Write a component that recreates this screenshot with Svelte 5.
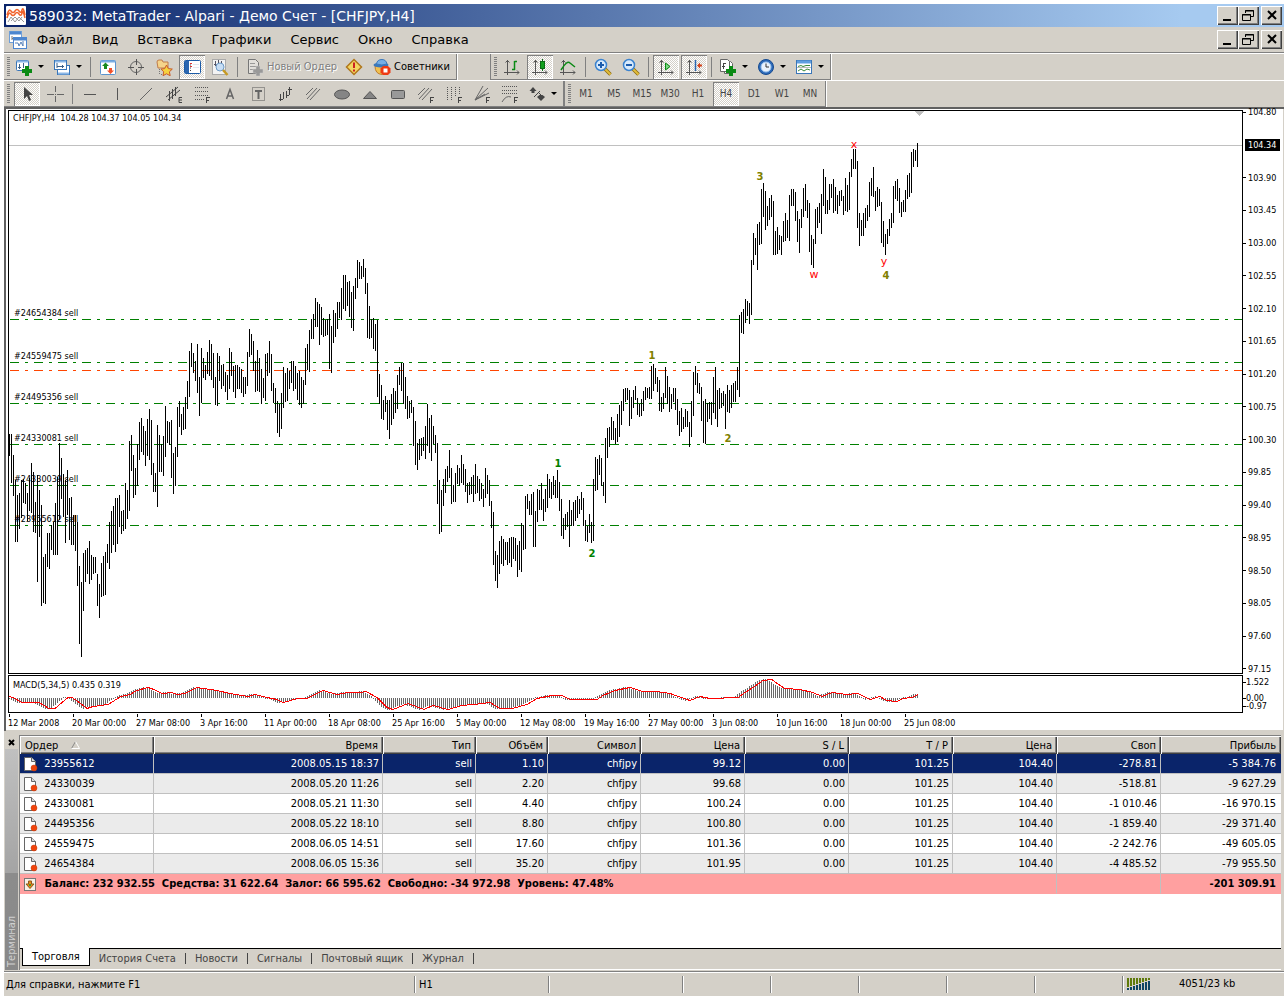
<script>
  // high-low of every bar, in pixels down the window
  const barData = `434-456 434-483 455-496 480-542 495-542 493-529 480-518 479-503 483-504 493-521 478-511 463-513 472-532 502-533 475-582
490-537 505-606 557-603 554-604 533-567 533-569 525-550 522-555 503-555 477-555 443-520 458-499 474-517 480-543 470-515
498-540 497-545 515-545 515-551 522-586 566-644 582-657 553-611 550-582 548-574 541-584 555-580 557-574 557-573 574-606
584-618 563-597 556-596 552-595 544-563 522-569 511-553 506-545 498-552 498-544 495-527 511-534 510-531 483-529 490-519
441-511 435-471 455-498 468-495 444-486 422-460 418-452 426-455 431-466 419-456 409-460 420-475 463-492 473-492 425-507
435-472 444-472 436-476 406-457 421-443 422-445 420-478 453-494 447-486 407-457 401-427 414-435 407-430 397-429 381-409
351-397 343-367 353-373 361-381 344-393 377-416 348-403 358-378 365-380 352-374 340-376 344-380 353-388 377-405 353-406
356-381 365-389 364-386 372-392 375-400 348-389 352-376 366-392 365-398 365-389 367-389 369-393 377-397 377-394 352-386
329-357 334-355 341-371 361-392 350-391 358-392 369-404 378-398 354-401 353-376 341-373 354-391 383-403 388-413 401-433
404-437 393-429 367-408 373-402 368-401 371-389 361-383 361-391 366-389 373-400 371-405 377-408 380-404 348-385 344-370
330-372 319-339 314-339 298-327 302-327 304-345 307-335 318-337 320-336 319-335 314-369 326-373 310-343 313-337 302-329
302-318 288-320 275-309 275-311 282-306 281-317 292-328 286-331 278-299 260-288 262-279 266-279 259-277 268-294 283-338
306-339 319-338 318-349 324-351 320-397 374-404 385-419 400-420 396-412 400-430 400-439 394-425 388-419 391-413 375-409
367-385 363-391 363-404 377-409 396-419 401-418 400-413 407-446 421-465 443-470 439-460 438-456 437-451 426-459 404-446
418-453 415-461 426-444 435-453 443-504 480-534 490-532 479-506 469-493 466-482 450-478 468-504 485-502 473-502 465-484
468-486 455-483 464-485 469-492 483-503 482-495 477-494 475-502 464-494 476-493 479-501 483-499 489-507 468-498 475-494
480-506 501-528 512-565 551-581 555-588 541-574 536-564 539-566 542-560 542-565 538-563 537-567 537-559 538-561 545-577
541-570 523-572 525-550 496-549 494-509 501-515 494-515 492-547 511-547 489-522 490-510 483-510 499-521 489-512 474-508
479-498 482-499 476-495 480-498 470-498 482-511 499-536 518-539 514-530 512-527 500-547 510-526 502-526 500-521 496-518
499-514 492-510 498-526 520-541 526-542 514-533 522-543 479-541 457-491 459-490 455-475 458-486 482-496 438-503 428-458
427-447 417-440 421-440 428-444 414-442 405-437 401-425 389-411 388-402 388-400 390-426 397-419 390-408 386-400 398-415
404-417 399-416 391-411 387-400 388-398 387-399 366-399 364-391 368-384 377-392 380-411 397-412 393-409 367-398 376-404
387-412 394-409 388-402 388-410 399-425 411-436 408-432 417-429 409-427 411-427 422-447 401-437 372-416 366-385 373-393
383-394 387-421 401-443 399-444 403-422 402-419 402-425 377-413 367-419 390-427 388-409 393-408 391-406 394-429 385-412
390-413 385-408 383-402 381-402 367-390 315-397 312-333 309-334 299-323 301-316 303-324 260-315 233-265 238-255 224-270
222-245 189-244 183-217 191-230 206-226 198-220 195-217 201-255 231-255 227-254 235-250 236-255 221-242 213-241 220-238
195-241 189-206 189-206 192-221 211-242 219-253 209-228 188-217 184-211 200-218 203-252 235-265 239-268 209-244 207-228
203-223 194-234 169-206 177-214 200-214 184-210 184-198 179-213 187-211 195-214 191-206 190-201 196-215 178-211 185-212
172-210 159-177 149-169 149-169 161-228 213-246 220-236 213-236 208-228 205-221 182-217 178-196 167-197 191-211 187-207
189-206 202-243 221-247 234-255 229-244 219-236 213-228 186-223 181-199 179-201 188-213 202-217 200-212 190-212 175-199
173-197 152-193 149-167 150-161 143-167`

  const signal = [
    [9, 696], [13, 697], [22, 702], [39, 702], [49, 708], [55, 708], [68, 697], [72, 697], [78, 701], [87, 708],
    [93, 706], [108, 704], [121, 696], [130, 694], [137, 690], [148, 687], [154, 689], [162, 693], [172, 692],
    [177, 694], [185, 693], [197, 687], [203, 688], [217, 690], [230, 693], [248, 696], [255, 694], [267, 697],
    [277, 699], [283, 702], [298, 698], [307, 698], [313, 695], [323, 690], [337, 694], [348, 692], [360, 692],
    [366, 691], [377, 697], [387, 707], [393, 709], [408, 703], [424, 709], [433, 705], [448, 709], [462, 705],
    [483, 703], [490, 702], [500, 708], [512, 708], [527, 704], [537, 698], [552, 695], [562, 695], [570, 699],
    [597, 699], [603, 695], [615, 690], [630, 687], [643, 691], [657, 691], [670, 693], [690, 700], [700, 696],
    [710, 698], [738, 697], [745, 692], [753, 687], [763, 680], [772, 679], [777, 683], [785, 688], [800, 689],
    [813, 692], [822, 696], [832, 692], [847, 694], [858, 693], [870, 699], [880, 696], [887, 700], [897, 701],
    [903, 698], [912, 697], [918, 694],
  ]

  const LEFT = 9
  const TOP = 111
  const MACD_TOP = 676
  const MACD_ZERO = 698

  const bars = barData.split(/\s+/).map((b) => b.split('-').map(Number))
  const barPath = bars.map(([h, l], i) => `M${i * 2 + 0.5} ${h - TOP}V${l - TOP}`).join('')

  function signalAt(x) {
    const k = signal.findIndex((p) => p[0] >= x)
    if (k < 0) return signal[signal.length - 1][1]
    if (k == 0) return signal[0][1]
    const [x0, y0] = signal[k - 1]
    const [x1, y1] = signal[k]
    return y0 + ((y1 - y0) * (x - x0)) / (x1 - x0)
  }

  // the histogram runs a few bars ahead of its signal line
  const histPath = bars
    .map((_, i) => {
      const y = Math.round(signalAt(LEFT + i * 2 + 5))
      return `M${i * 2 + 0.5} ${MACD_ZERO - MACD_TOP}V${(y >= MACD_ZERO ? y + 1 : y) - MACD_TOP}`
    })
    .join('')
  const signalPath = signal.map(([x, y]) => `${x - LEFT},${y - MACD_TOP + 0.5}`).join(' ')

  const orders = [
    { label: '#24654384 sell', y: 319, color: 'green' },
    { label: '#24559475 sell', y: 362, color: 'green' },
    { label: '', y: 370, color: 'orangered' },
    { label: '#24495356 sell', y: 403, color: 'green' },
    { label: '#24330081 sell', y: 444, color: 'green' },
    { label: '#24330039 sell', y: 485, color: 'green' },
    { label: '#23955612 sell', y: 525, color: 'green' },
  ]

  const waves = [
    { t: '1', x: 558, y: 467, c: 'green' },
    { t: '2', x: 592, y: 557, c: 'green' },
    { t: '1', x: 652, y: 359, c: 'olive' },
    { t: '2', x: 728, y: 442, c: 'olive' },
    { t: '3', x: 760, y: 180, c: 'olive' },
    { t: '4', x: 886, y: 279, c: 'olive' },
    { t: 'x', x: 854, y: 148, c: 'red' },
    { t: 'w', x: 814, y: 278, c: 'red' },
    { t: 'y', x: 884, y: 265, c: 'red' },
  ]

  const prices = ['104.80', '104.34', '103.90', '103.45', '103.00', '102.55', '102.10', '101.65', '101.20',
    '100.75', '100.30', '99.85', '99.40', '98.95', '98.50', '98.05', '97.60', '97.15']

  const dates = ['12 Mar 2008', '20 Mar 00:00', '27 Mar 08:00', '3 Apr 16:00', '11 Apr 00:00', '18 Apr 08:00',
    '25 Apr 16:00', '5 May 00:00', '12 May 08:00', '19 May 16:00', '27 May 00:00', '3 Jun 08:00',
    '10 Jun 16:00', '18 Jun 00:00', '25 Jun 08:00']

  const menu = ['Файл', 'Вид', 'Вставка', 'Графики', 'Сервис', 'Окно', 'Справка']
  const periods = ['M1', 'M5', 'M15', 'M30', 'H1', 'H4', 'D1', 'W1', 'MN']
  const tabs = ['Торговля', 'История Счета', 'Новости', 'Сигналы', 'Почтовый ящик', 'Журнал']

  const columns = ['Ордер', 'Время', 'Тип', 'Объём', 'Символ', 'Цена', 'S / L', 'T / P', 'Цена', 'Своп', 'Прибыль']
  const rows = [
    ['23955612', '2008.05.15 18:37', 'sell', '1.10', 'chfjpy', '99.12', '0.00', '101.25', '104.40', '-278.81', '-5 384.76'],
    ['24330039', '2008.05.20 11:26', 'sell', '2.20', 'chfjpy', '99.68', '0.00', '101.25', '104.40', '-518.81', '-9 627.29'],
    ['24330081', '2008.05.21 11:30', 'sell', '4.40', 'chfjpy', '100.24', '0.00', '101.25', '104.40', '-1 010.46', '-16 970.15'],
    ['24495356', '2008.05.22 18:10', 'sell', '8.80', 'chfjpy', '100.80', '0.00', '101.25', '104.40', '-1 859.40', '-29 371.40'],
    ['24559475', '2008.06.05 14:51', 'sell', '17.60', 'chfjpy', '101.36', '0.00', '101.25', '104.40', '-2 242.76', '-49 605.05'],
    ['24654384', '2008.06.05 15:36', 'sell', '35.20', 'chfjpy', '101.95', '0.00', '101.25', '104.40', '-4 485.52', '-79 955.50'],
  ]

  const plus = '<path d="M10 8h4v3h3v4h-3v3h-4v-3H7v-4h3z" fill="#0a8a14"/>'
  const axes = '<path d="M4.500 2v15M1 14.500h15M2.500 4.500l2-2 2 2M14 12.500l2 2-2 2" fill="none" stroke="#555"/>'
  const smallF = '<path d="M13.500 18v-6M13 12.500h4M13 15.500h3" fill="none" stroke="#444"/>'
  const slants = '<path d="M2 14L12 3M5 15L15 4M1 10L8 3" stroke="#666" fill="none"/>'
  const lens = '<path d="M11 11l5.500 5.500" stroke="#8c6a10" stroke-width="3.500"/><path d="M11 11l5.500 5.500" stroke="#e2bd3c" stroke-width="2"/><circle cx="7" cy="7" r="5.500" fill="#d8eafc" stroke="#3b83cf" stroke-width="1.500"/>'

  const icons = {
    newChart: '<rect x="1.500" y="2.500" width="12" height="10" rx="1" fill="#fff" stroke="#3a76b8"/><path d="M2 3.500h11" stroke="#8ab6e6" stroke-width="2"/><path d="M4.500 6v5M3 9.500h3M8.500 5v5" stroke="#3a5f88"/>' + plus,
    profiles: '<rect x="4.500" y="7.500" width="12" height="9" fill="#fff" stroke="#3a76b8"/><path d="M5 15.500h11" stroke="#8ab6e6" stroke-width="2"/><rect x="1.500" y="2.500" width="12" height="9" fill="#fff" stroke="#3a76b8"/><path d="M2 3.500h11" stroke="#8ab6e6" stroke-width="2"/><path d="M4 5v5M4 8.500h7M9.500 7v3" stroke="#3a5f88"/>',
    market: '<rect x="1.500" y="2.500" width="15" height="14" rx="1" fill="#fff" stroke="#5b94cf"/><path d="M2 3.500h14" stroke="#79ade2" stroke-width="2"/><path d="M6.500 4.500L10 8H8v3H5V8H3z" fill="#198a1d"/><path d="M11.500 16l3.500-3.500h-2V10h-3v2.500H8z" fill="#f2512a"/>',
    cross: '<circle cx="9" cy="9" r="5.500" fill="none" stroke="#666"/><path d="M9.500 1v6M9.500 11v6M1 9.500h6M11 9.500h6" stroke="#555"/>',
    navigator: '<path d="M2 4q0-2 2-2h3l1 2h5v6H3z" fill="#f5d48a" stroke="#c07c4a"/><path d="M4.500 11v6M6 16.500h3" stroke="#777" stroke-dasharray="1 1"/><path d="M11.500 7l1.800 3.600 4 .5-2.900 2.700.8 3.900-3.700-1.900-3.500 1.900.7-3.900-2.700-2.700 3.700-.5z" fill="#f6d23f" stroke="#c8592b"/>',
    terminal: '<rect x="1.500" y="2.500" width="16" height="13" rx="1" fill="#fff" stroke="#1c5ba6"/><path d="M4 3v12" stroke="#2a66b0" stroke-width="4"/><path d="M7 5.500h2M7 8.500h2" stroke="#d33"/><path d="M7 7h1M7 10h1M7 12.500h1" stroke="#444"/><path d="M10 6.500h6M10 9.500h6" stroke="#e2e7ef"/>',
    tester: '<rect x="1.500" y="1.500" width="13" height="15" fill="#f3f3f3" stroke="#aaa"/><path d="M4.500 3v5M7.500 2v4M10.500 3v5M3 6.500h3" stroke="#556"/><circle cx="9" cy="9" r="4" fill="#c8def5" stroke="#6f9cc8"/><path d="M12 12l4.500 5" stroke="#c79a22" stroke-width="2.500"/>',
    order: '<path d="M2.500 1.500h7l3 3v11h-10z" fill="#e2e0dc" stroke="#777"/><path d="M4 5.500h5M4 8.500h7M4 11.500h4" stroke="#999"/><path d="M10 8h4v3h3v4h-3v3h-4v-3H7v-4h3z" fill="#999" stroke="#ccc" stroke-width=".5"/>',
    alert: '<path d="M9 1.500L16.500 9 9 16.500 1.500 9z" fill="#f3d560" stroke="#b0771c" stroke-width="1.500"/><path d="M9 4.500v5.500M9 11.500v2" stroke="#c22" stroke-width="2"/>',
    expert: '<path d="M2 8q0 8 7 8.500 5-2 5-8.500z" fill="#f0c050" stroke="#c07c2a"/><ellipse cx="8" cy="7" rx="7.500" ry="2.500" fill="#3b78bb"/><path d="M3.500 6Q4 1.500 9 1.500q4 0 5 4.500-5 2-10.500 0z" fill="#76aee6" stroke="#3b78bb"/><path d="M10 8h5l2.500 2.500v4L15 17h-5l-2.500-2.500v-4z" fill="#ee3a14"/><rect x="10.500" y="10.500" width="4" height="4" fill="#fff"/>',
    barChart: axes + '<path d="M11.500 3v9M11.500 3.500H14M9 11.500h3" stroke="#0a8a14" stroke-width="1.500"/>',
    candles: axes + '<path d="M11.500 1v12" stroke="#0a6a14"/><rect x="9.500" y="3.500" width="4" height="7" fill="#11a01c" stroke="#0a6a14"/>',
    lineChart: axes + '<path d="M2 12q6-10 9-7l5 4" fill="none" stroke="#0a8a14" stroke-width="1.500"/>',
    zoomIn: lens + '<path d="M4 7h6M7 4v6" stroke="#1b5cad" stroke-width="2"/>',
    zoomOut: lens + '<path d="M4 7h6" stroke="#1b5cad" stroke-width="2"/>',
    scroll: axes + '<path d="M8.500 5l4.500 3.500-4.500 3.500z" fill="#7cd884" stroke="#0a8a14"/>',
    shift: axes + '<path d="M10.500 2v11" stroke="#2a66b0" stroke-width="1.500"/><path d="M12 7.500l3-3v2h2v2h-2v2z" fill="#d2431c"/>',
    indicators: '<path d="M5.500 3.500h6l2 2v10h-8z" fill="#fff" stroke="#666"/><path d="M1.500 1.500h7l2 2v10h-9z" fill="#fff" stroke="#666"/><path d="M4.500 5v6M4.500 5.500H7M3 8.500h3" fill="none" stroke="#444"/>' + plus,
    clock: '<circle cx="9" cy="9" r="7.500" fill="#2c6ab9" stroke="#154a90"/><circle cx="9" cy="9" r="5" fill="#e9f3fd" stroke="#9cc4ee"/><path d="M9 5.500V9h3" fill="none" stroke="#333"/>',
    templates: '<rect x="1.500" y="2.500" width="15" height="13" fill="#fff" stroke="#3a76b8"/><path d="M2 4h14" stroke="#5f9ee0" stroke-width="3"/><path d="M3 8.500l3-1 2 1 3-1h4M3 13l3-2 3 2 3-2 3 1" fill="none" stroke="#3a8a3a"/><path d="M2 9.500h14" stroke="#777" stroke-width=".5"/>',
    cursor: '<path d="M6 2v12l3-3 2 5 2-1-2-5h4z" fill="#444"/>',
    hair: '<path d="M9.500 1v6M9.500 11v6M1 9.500h7M11 9.500h7M9 9.500h1" stroke="#666"/>',
    hline: '<path d="M3 9.500h12" stroke="#555"/>',
    vline: '<path d="M8.500 3v12" stroke="#555"/>',
    trend: '<path d="M3 15L15 3" stroke="#666"/>',
    pitch: '<path d="M1 12L13 2M3 15L15 5M4.500 6v10M7.500 4v10M10.500 2v9" fill="none" stroke="#444"/><path d="M17 12.500h-3v5h3M14 15h3" fill="none" stroke="#444"/>',
    fibo: '<path d="M2 2.500h14M2 6.500h14M2 10.500h14M2 14.500h9" stroke="#555" stroke-dasharray="1 1"/>' + smallF,
    text: '<path d="M5.500 14L9 4.500 12.500 14M6.500 11h5" fill="none" stroke="#666" stroke-width="1.500"/>',
    label: '<rect x="3.500" y="2.500" width="12" height="13" fill="none" stroke="#555" stroke-dasharray="1 1"/><path d="M6 6h7M9.500 6v8" stroke="#666" stroke-width="2"/>',
    gann: '<path d="M3.500 9v7M2 14.500h4M6.500 7v7M9.500 6v7M9 10.500h3M12.500 2v8M11 4.500h4" stroke="#444"/>',
    channel: slants,
    ellipse: '<ellipse cx="9" cy="9.500" rx="7.500" ry="4.500" fill="#858585" stroke="#555"/>',
    triangle: '<path d="M2.500 13.500l6.500-7 6.500 7z" fill="#858585" stroke="#555"/>',
    rect: '<rect x="2.500" y="5.500" width="13" height="8" rx="1" fill="#999" stroke="#555"/>',
    channelF: slants + smallF,
    timeF: '<path d="M2.500 2v14M6.500 2v14M10.500 2v10M14.500 2v8" stroke="#555" stroke-dasharray="1 1"/>' + smallF,
    fan: '<path d="M2 15L15 3M2 15L10 1M2 15L16 8M2 15l10-6" stroke="#666" fill="none"/>' + smallF,
    arcs: '<path d="M1 1.500h16M1 5.500h16M1 8.500h16" stroke="#555" stroke-dasharray="1 1"/><path d="M1 17q4-7 9-5" fill="none" stroke="#666"/>' + smallF,
    arrows: '<path d="M5 2l3.500 4H6.500v2h-3V6H1.500z" fill="#444"/><path d="M6 12l6-6M11 8l2 2" stroke="#444"/><path d="M13 16l4-4-2.500-2h-3L9 12z" fill="#444"/>',
  }

  const standard = [
    { icon: 'newChart', name: 'Новый график', drop: true },
    { icon: 'profiles', name: 'Профили', drop: true },
    { sep: true },
    { icon: 'market', name: 'Обзор рынка' },
    { icon: 'cross', name: 'Окно данных' },
    { icon: 'navigator', name: 'Навигатор' },
    { icon: 'terminal', name: 'Терминал', on: true },
    { icon: 'tester', name: 'Тестер' },
    { sep: true },
    { icon: 'order', name: 'Новый Ордер', text: true, off: true },
    { icon: 'alert', name: 'Редактор' },
    { icon: 'expert', name: 'Советники', text: true },
  ]
  const charts = [
    { icon: 'barChart', name: 'Бары' },
    { icon: 'candles', name: 'Свечи', on: true },
    { icon: 'lineChart', name: 'Линия' },
    { sep: true },
    { icon: 'zoomIn', name: 'Увеличить' },
    { icon: 'zoomOut', name: 'Уменьшить' },
    { sep: true },
    { icon: 'scroll', name: 'Автопрокрутка', on: true },
    { icon: 'shift', name: 'Сдвиг графика', on: true },
    { sep: true },
    { icon: 'indicators', name: 'Индикаторы', drop: true },
    { icon: 'clock', name: 'Периоды', drop: true },
    { icon: 'templates', name: 'Шаблоны', drop: true },
  ]
  const tools = [
    { icon: 'cursor', name: 'Курсор', on: true },
    { icon: 'hair', name: 'Перекрестие' },
    { sep: true },
    ...['hline', 'vline', 'trend', 'pitch', 'fibo', 'text', 'label', 'gann', 'channel', 'ellipse', 'triangle',
      'rect', 'channelF', 'timeF', 'fan', 'arcs'].map((icon) => ({ icon, name: icon })),
    { icon: 'arrows', name: 'Стрелки', drop: true },
  ]

  let period = $state('H4')
  let tab = $state('Торговля')
  let selected = $state(0)
</script>

{#snippet toolbar(items)}
  <span class="grip"></span>
  {#each items as it}
    {#if it.sep}
      <span class="sep"></span>
    {:else}
      <button class="tool" class:on={it.on} class:drop={it.drop} class:wide={it.text} disabled={it.off} aria-label={it.name}>
        <svg width="18" height="18" viewBox="0 0 18 18">{@html icons[it.icon]}</svg>
        {#if it.text}<span>{it.name}</span>{/if}
        {#if it.drop}<i></i>{/if}
      </button>
    {/if}
  {/each}
{/snippet}

{#snippet windowButtons()}
  <div class="winbtns">
    <button aria-label="Свернуть"><svg width="15" height="13"><path d="M3 11h8" stroke="#000" stroke-width="2" /></svg></button>
    <button aria-label="Восстановить">
      <svg width="15" height="13" fill="none" stroke="#000"><path d="M4.500 4V1.500h8v6H10M4 2h9M1.500 5.500h8v6h-8zM1 6h9" /></svg>
    </button>
    <button class="close" aria-label="Закрыть"><svg width="15" height="13"><path d="M4 2l8 8M12 2l-8 8" stroke="#000" stroke-width="2" /></svg></button>
  </div>
{/snippet}

<div class="window">
  <header class="title">
    <svg width="20" height="19" viewBox="0 0 20 19">
      <rect width="20" height="19" rx="1" fill="#fff" />
      <path d="M1 9q2-7 4-4t4 0 4 0 3-1 3 5M1 12q2-7 4-4t4 0 4 0 3-1 3 5" fill="none" stroke="#f0642d" stroke-width="1.500" />
      <path d="M2 16l3-5 4 5 4-5 5 5M5 15l4-4 4 4 3-4" fill="none" stroke="#999" />
    </svg>
    <h1>589032: MetaTrader - Alpari - Демо Счет - [CHFJPY,H4]</h1>
    {@render windowButtons()}
  </header>

  <nav class="menu">
    <svg width="18" height="18" viewBox="0 0 18 18">
      <rect x=".5" y=".5" width="12" height="11" fill="#fff" stroke="#6f9fd8" />
      <path d="M1 2h11" stroke="#4d86cf" stroke-width="3" />
      <path d="M3 5v4M3 7.500h3" stroke="#777" />
      <rect x="4.500" y="6.500" width="13" height="11" fill="#fff" stroke="#4d86cf" />
      <path d="M5 8h12" stroke="#4d86cf" stroke-width="3" />
      <path d="M6 12h3l1 3 2-4 2 4v-5" fill="none" stroke="#5580b8" />
    </svg>
    {#each menu as m}
      <button>{m}</button>
    {/each}
    {@render windowButtons()}
  </nav>

  <div class="bars">
    <div class="bar standard">{@render toolbar(standard)}</div>
    <div class="bar charts">{@render toolbar(charts)}</div>
  </div>
  <div class="bars">
    <div class="bar lines">{@render toolbar(tools)}</div>
    <div class="bar periods">
      <span class="grip"></span>
      {#each periods as p}
        <button class="tool" class:on={p == period} onclick={() => (period = p)}>{p}</button>
      {/each}
    </div>
  </div>

  <main class="chart">
    <div class="pane">
      <svg class="plot price" width="100%" height="562">
        {#each orders as o}
          <line x1="1" x2="100%" y1={o.y - TOP + 0.5} y2={o.y - TOP + 0.5} stroke={o.color} stroke-dasharray="9 6 3 6" />
          <text x="5" y={o.y - TOP - 3}>{o.label}</text>
        {/each}
        <line x1="0" x2="100%" y1="34.500" y2="34.500" stroke="silver" />
        <path d={barPath} stroke="#000" />
        <path d="M906 0h9l-4.500 5z" fill="silver" />
        <text x="4" y="10" xml:space="preserve">CHFJPY,H4  104.28 104.37 104.05 104.34</text>
        {#each waves as w}
          <text class="wave" class:letter={w.c == 'red'} x={w.x - LEFT} y={w.y - TOP} fill={w.c}>{w.t}</text>
        {/each}
      </svg>
      <ol class="scale">
        {#each prices as p, i}
          <li class:current={i == 1}>{p}</li>
        {/each}
      </ol>
    </div>
    <div class="pane">
      <svg class="plot macd" width="100%" height="36">
        <path d={histPath} stroke="dimgray" />
        <polyline points={signalPath} fill="none" stroke="red" />
        <text x="4" y="12">MACD(5,34,5) 0.435 0.319</text>
      </svg>
      <ol class="scale indicator">
        <li>1.522</li>
        <li>0.00</li>
        <li>-0.97</li>
      </ol>
    </div>
    <ol class="dates">
      {#each dates as d}
        <li>{d}</li>
      {/each}
    </ol>
  </main>

  <section class="terminal">
    <aside>
      <button aria-label="Закрыть терминал"><svg width="7" height="7"><path d="M1 1l5 5M6 1L1 6" stroke="#000" stroke-width="2" /></svg></button>
      <span>Терминал</span>
    </aside>
    <div class="panel">
      <table>
        <colgroup>
          <col class="c-order" /><col class="c-time" /><col class="c-type" /><col class="c-size" /><col class="c-type" />
          <col class="c-num" /><col class="c-num" /><col class="c-num" /><col class="c-num" /><col class="c-num" /><col />
        </colgroup>
        <thead>
          <tr>
            {#each columns as c, i}
              <th>
                {c}
                {#if i == 0}<svg width="9" height="8"><path d="M.5 7.500L4.500 .5" stroke="#888" /><path d="M4.500 .5l4 7h-8" fill="none" stroke="#fff" /></svg>{/if}
              </th>
            {/each}
          </tr>
        </thead>
        <tbody>
          {#each rows as row, r}
            <tr class:selected={r == selected} onclick={() => (selected = r)}>
              {#each row as cell, i}
                <td>
                  {#if i == 0}
                    <svg width="16" height="16" viewBox="0 0 16 16">
                      <path d="M1.500 1.500h7l4 4v9h-11z" fill="#fff" stroke="#666" />
                      <path d="M8.500 1.500v4h4" fill="#ddd" stroke="#666" />
                      <circle cx="11" cy="12" r="3" fill="#f0440c" stroke="#c03a10" stroke-width=".5" />
                    </svg>
                  {/if}
                  {cell}
                </td>
              {/each}
            </tr>
          {/each}
        </tbody>
        <tfoot>
          <tr>
            <td colspan="9">
              <svg width="16" height="16" viewBox="0 0 16 16">
                <rect x="1.500" y="2.500" width="11" height="12" fill="#f6f1e6" stroke="#777" />
                <path d="M5.500 5h3v3h2.500L7 12.500 3 8h2.500z" fill="#e8871c" stroke="#8f5a1a" />
                <path d="M6 8h2v2H6z" fill="#3c9a30" />
              </svg>
              Баланс: 232 932.55&nbsp; Средства: 31 622.64&nbsp; Залог: 66 595.62&nbsp; Свободно: -34 972.98&nbsp; Уровень: 47.48%
            </td>
            <td></td>
            <td>-201 309.91</td>
          </tr>
        </tfoot>
      </table>
      <div class="tabs">
        {#each tabs as t}
          <button class:active={t == tab} onclick={() => (tab = t)}>{t}</button>
        {/each}
      </div>
    </div>
  </section>

  <footer class="status">
    <span class="help">Для справки, нажмите F1</span>
    <span class="profile">H1</span>
    <span class="profile"></span>
    <span></span>
    <span></span>
    <span></span>
    <span></span>
    <span></span>
    <span class="traffic">
      <svg width="24" height="13">
        {#each [2, 3, 4, 5, 6, 7, 8, 9] as h, i}
          <rect x={i * 3} y="0" width="2" height={11 - h} fill="#5f7a0a" />
          <rect x={i * 3} y={12 - h} width="2" height={h} fill="#0d4464" />
        {/each}
      </svg>
      4051/23 kb
    </span>
  </footer>
</div>

<style>
  :global(body) {
    margin: 0;
    background: #fff;
  }
  .window {
    --face: #d4d0c8;
    margin: 4px 4px 0;
    background: var(--face);
    font: 11px/14px "DejaVu Sans Condensed", Tahoma, "Noto Sans", sans-serif;
    color: #000;
    cursor: default;
  }
  button {
    font: inherit;
    color: inherit;
    background: none;
    border: 0;
    padding: 0;
    margin: 0;
  }
  ol {
    list-style: none;
    margin: 0;
    padding: 0;
  }
  svg {
    display: block;
    flex: none;
  }

  .title {
    display: flex;
    align-items: center;
    height: 23px;
    padding: 0 2px;
    background: linear-gradient(90deg, #0a246a, #a6caf0 92%);
  }
  .title h1 {
    flex: 1;
    margin: 0 3px;
    font: 14px/22px "DejaVu Sans", Verdana, sans-serif;
    color: #fff;
    white-space: nowrap;
  }
  .winbtns {
    display: flex;
    margin-left: auto;
  }
  .winbtns button {
    display: flex;
    align-items: center;
    justify-content: center;
    width: 21px;
    height: 19px;
    background: var(--face);
    box-shadow: inset 1px 1px #fff, inset -1px -1px #404040, inset -2px -2px #808080;
  }
  .winbtns .close {
    margin-left: 2px;
  }

  .menu {
    display: flex;
    align-items: center;
    gap: 19px;
    height: 25px;
    padding: 0 2px 0 5px;
    border-bottom: 1px solid #808080;
    font: 13px/20px "DejaVu Sans", Verdana, sans-serif;
  }
  .menu > svg {
    margin-right: -9px;
  }

  .bars {
    display: flex;
    height: 26px;
    border-top: 1px solid #fff;
  }
  .bar {
    display: flex;
    align-items: center;
    gap: 2px;
    padding: 0 2px;
    border-right: 1px solid #808080;
    border-bottom: 1px solid #808080;
    box-shadow: 1px 0 #fff;
  }
  .standard {
    padding-right: 4px;
  }
  .charts {
    margin-left: 33px;
    border-left: 1px solid #808080;
  }
  .grip {
    width: 3px;
    height: 20px;
    margin-left: 1px;
    background: repeating-linear-gradient(#808080 0 1px, transparent 1px 2px);
  }
  .lines .grip {
    margin-right: 2px;
  }
  .periods {
    border-left: 1px solid #808080;
  }
  .sep {
    width: 1px;
    height: 20px;
    margin: 0 2px;
    background: #808080;
  }
  .tool {
    display: flex;
    align-items: center;
    justify-content: center;
    width: 26px;
    height: 24px;
    font-size: 10px;
    color: #444;
  }
  .tool.on {
    background: repeating-conic-gradient(#fff 0 25%, #d4d0c8 0 50%) 0 0 / 2px 2px;
    box-shadow: inset 1px 1px #808080, inset -1px -1px #fff;
  }
  .tool.drop {
    width: 36px;
    justify-content: flex-start;
    gap: 5px;
    padding-left: 3px;
  }
  .tool i {
    border: 3px solid transparent;
    border-top-color: #000;
    border-bottom: 0;
  }
  .tool.wide {
    width: auto;
    gap: 3px;
    padding: 0 2px 0 4px;
    font-size: 11px;
    color: #000;
  }
  .tool:disabled {
    color: #808080;
    text-shadow: 1px 1px #fff;
  }

  .chart {
    background: #fff;
    border: solid #606060;
    border-width: 2px 0 0 2px;
    box-shadow: inset -1px -1px #d4d0c8;
    padding: 1px 2px 0 2px;
    font-size: 9px;
    line-height: 12px;
  }
  .pane {
    display: flex;
    margin-bottom: 1px;
  }
  .plot {
    flex: 1;
    min-width: 0;
    border: 1px solid #000;
    shape-rendering: crispEdges;
  }
  .wave {
    font-family: "DejaVu Sans", Verdana, sans-serif;
    font-size: 10px;
    font-weight: bold;
    text-anchor: middle;
  }
  .wave.letter {
    font-size: 11px;
    font-weight: normal;
  }
  .scale {
    display: flex;
    flex-direction: column;
    justify-content: space-between;
    width: 39px;
    height: 569px;
    margin: -4px 0 -1px;
  }
  .scale li {
    display: flex;
    align-items: center;
    height: 12px;
  }
  .scale li::before {
    content: "";
    width: 3px;
    height: 1px;
    margin-right: 2px;
    background: #000;
  }
  .scale .current {
    margin: 0 2px;
    background: #000;
    color: #fff;
  }
  .scale .current::before {
    width: 1px;
  }
  .indicator {
    height: 36px;
    margin: 1px 0;
  }
  .indicator li::before {
    margin-right: 0;
  }
  .indicator li:last-child {
    margin-top: -8px;
  }
  .dates {
    display: flex;
    height: 17px;
    overflow: hidden;
  }
  .dates li {
    width: 64px;
    flex: none;
    white-space: nowrap;
  }
  .dates li::before {
    content: "";
    display: block;
    width: 1px;
    height: 3px;
    margin-left: 1px;
    background: #000;
  }

  .terminal {
    display: flex;
    margin-top: 4px;
    padding-right: 3px;
  }
  aside {
    display: flex;
    flex-direction: column;
    width: 15px;
  }
  aside button {
    display: flex;
    align-items: center;
    justify-content: center;
    height: 14px;
  }
  aside span {
    flex: 1;
    margin: 0 1px;
    padding-top: 3px;
    background: linear-gradient(0deg, #c0c0c0, #a4a4a4 124px, #8c8c8c 124px, #888);
    color: #d0d0d0;
    writing-mode: vertical-rl;
    transform: rotate(180deg);
  }
  .panel {
    flex: 1;
    min-width: 0;
    border-left: 1px solid #808080;
    border-top: 1px solid #808080;
    background: #fff;
  }
  table {
    width: 100%;
    table-layout: fixed;
    border-collapse: separate;
    border-spacing: 0;
  }
  .c-order {
    width: 134px;
  }
  .c-time {
    width: 229px;
  }
  .c-type {
    width: 93px;
  }
  .c-size {
    width: 72px;
  }
  .c-num {
    width: 104px;
  }
  th {
    height: 17px;
    padding: 1px 5px 0;
    background: var(--face);
    box-shadow: inset 1px 1px #fff, inset -1px -1px #404040, inset -2px -2px #808080;
    font-weight: normal;
    text-align: right;
  }
  th svg {
    display: inline-block;
    margin-left: 10px;
  }
  th:first-child,
  td:first-child {
    text-align: left;
  }
  td {
    height: 19px;
    padding: 0 3px;
    border-right: 1px solid silver;
    border-bottom: 1px solid silver;
    text-align: right;
    white-space: nowrap;
  }
  td:last-child {
    border-right: 0;
    padding-right: 5px;
  }
  td svg {
    display: inline-block;
    vertical-align: middle;
    margin-right: 2px;
  }
  tbody tr:nth-child(even) {
    background: #ebebeb;
  }
  tbody .selected {
    background: #0a246a;
    color: #fff;
  }
  tfoot {
    background: #ffa0a0;
    font-weight: bold;
  }
  tfoot td {
    border-bottom-color: #ffa0a0;
  }
  .tabs {
    display: flex;
    align-items: center;
    height: 18px;
    margin-top: 54px;
    padding: 0 0 2px 2px;
    border-top: 1px solid #000;
    border-bottom: 1px solid #fff;
    background: var(--face);
    color: #444;
  }
  .tabs button {
    padding: 0 9px;
    border-right: 1px solid #444;
    line-height: 11px;
  }
  .tabs .active {
    align-self: flex-start;
    height: 18px;
    margin-top: -1px;
    border: 1px solid #000;
    border-top: 0;
    background: #fff;
    color: #000;
  }

  .status {
    display: flex;
    align-items: center;
    height: 24px;
    margin-top: 1px;
    border-top: 1px solid #808080;
    border-bottom: 1px solid #fff;
    box-shadow: inset 0 1px #fff;
  }
  .status span {
    box-sizing: border-box;
    width: 88px;
    height: 17px;
    padding-left: 4px;
    border-left: 1px solid #808080;
    box-shadow: inset 1px 0 #fff;
    line-height: 18px;
  }
  .status .help {
    flex: 1;
    padding-left: 2px;
    border: 0;
    box-shadow: none;
  }
  .status .profile {
    width: 134px;
  }
  .status .traffic {
    display: flex;
    align-items: center;
    gap: 28px;
    width: 162px;
  }
</style>
